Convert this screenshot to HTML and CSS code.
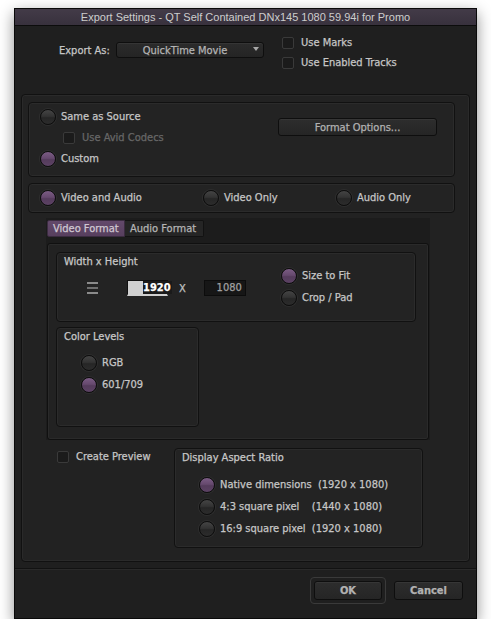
FILE: index.html
```html
<!DOCTYPE html>
<html>
<head>
<meta charset="utf-8">
<link rel="stylesheet" href="styles.css">
</head>
<body>
<div class="window">
  <div class="titlebar">Export Settings - QT Self Contained DNx145 1080 59.94i for Promo</div>
  <div class="top">
    <div class="export-as">
      <span class="export-label">Export As:</span>
      <div class="dropdown"><span class="dd-text">QuickTime Movie</span><span class="dd-arrow"></span></div>
    </div>
    <div class="top-checks">
      <div class="row"><span class="check"></span><span class="lbl">Use Marks</span></div>
      <div class="row"><span class="check"></span><span class="lbl">Use Enabled Tracks</span></div>
    </div>
  </div>
  <div class="panel">
    <div class="group g-source">
      <div class="source-col">
        <div class="row"><span class="radio"></span><span class="lbl">Same as Source</span></div>
        <div class="row indent"><span class="check"></span><span class="lbl disabled">Use Avid Codecs</span></div>
        <div class="row"><span class="radio on"></span><span class="lbl">Custom</span></div>
      </div>
      <div class="btn format-btn">Format Options...</div>
    </div>
    <div class="group g-tracks">
      <div class="row t1"><span class="radio on"></span><span class="lbl">Video and Audio</span></div>
      <div class="row t2"><span class="radio"></span><span class="lbl">Video Only</span></div>
      <div class="row t3"><span class="radio"></span><span class="lbl">Audio Only</span></div>
    </div>
    <div class="tabarea">
      <div class="tabs">
        <div class="tab active">Video Format</div>
        <div class="tab">Audio Format</div>
      </div>
      <div class="tabpane">
        <div class="group g-wh">
          <div class="wh-left">
            <div class="glabel">Width x Height</div>
            <div class="wh-inputs">
              <svg class="link" width="11" height="12" viewBox="0 0 11 12"><rect x="0" y="0" width="11" height="2" fill="#8a8a8a"/><rect x="0" y="5" width="11" height="2" fill="#6f6f6f"/><rect x="0" y="10" width="11" height="2" fill="#8a8a8a"/></svg>
              <div class="field sel"><span class="selblock"></span><span class="seltext">1920</span></div>
              <span class="x">X</span>
              <div class="field">1080</div>
            </div>
          </div>
          <div class="wh-right">
            <div class="row"><span class="radio on"></span><span class="lbl">Size to Fit</span></div>
            <div class="row"><span class="radio"></span><span class="lbl">Crop / Pad</span></div>
          </div>
        </div>
        <div class="group g-color">
          <div class="glabel">Color Levels</div>
          <div class="radios">
            <div class="row"><span class="radio"></span><span class="lbl">RGB</span></div>
            <div class="row"><span class="radio on"></span><span class="lbl">601/709</span></div>
          </div>
        </div>
      </div>
    </div>
    <div class="bottom-row">
      <div class="row preview"><span class="check"></span><span class="lbl">Create Preview</span></div>
      <div class="group g-dar">
        <div class="glabel">Display Aspect Ratio</div>
        <div class="radios">
          <div class="row"><span class="radio on"></span><span class="lbl">Native dimensions&nbsp; (1920 x 1080)</span></div>
          <div class="row"><span class="radio"></span><span class="lbl">4:3 square pixel&nbsp;&nbsp;&nbsp; (1440 x 1080)</span></div>
          <div class="row"><span class="radio"></span><span class="lbl">16:9 square pixel&nbsp; (1920 x 1080)</span></div>
        </div>
      </div>
    </div>
  </div>
  <div class="footer">
    <div class="ok-ring"><div class="btn ok">OK</div></div>
    <div class="btn cancel">Cancel</div>
  </div>
</div>
</body>
</html>
```
FILE: styles.css
```css
html, body {
  margin: 0;
  padding: 0;
  background: #ffffff;
}
body {
  font-family: "DejaVu Sans Condensed", "DejaVu Sans", sans-serif;
  font-size: 11px;
  color: #c6c6c6;
  -webkit-text-stroke: 0.25px currentColor;
}
.window {
  width: 463px;
  height: 611px;
  margin: 8px 0 0 14px;
  box-sizing: border-box;
  border: 1px solid #0a0a0a;
  background: #1f1f1f;
  box-shadow: 0 5px 14px rgba(0, 0, 0, 0.45);
  display: flex;
  flex-direction: column;
}
.titlebar {
  height: 16px;
  line-height: 16px;
  border-bottom: 1px solid #0c0c0c;
  background: linear-gradient(#433b48, #38313d);
  color: #cdcdcd;
  font-family: "Liberation Sans", Arial, sans-serif;
  font-size: 11px;
  -webkit-text-stroke: 0;
  text-align: center;
  flex: none;
}
.top {
  height: 68px;
  box-sizing: border-box;
  padding: 11px 0 0 44px;
  display: flex;
  flex: none;
}
.export-as {
  display: flex;
  align-items: center;
  height: 16px;
  margin-top: 5px;
}
.export-label {
  width: 57px;
}
.dropdown {
  width: 148px;
  height: 16px;
  box-sizing: border-box;
  border: 1px solid #0e0e0e;
  border-radius: 3px;
  background: linear-gradient(#2b2b2b, #242424);
  box-shadow: inset 0 1px 0 #353535;
  display: flex;
  align-items: center;
  justify-content: center;
  position: relative;
  color: #b4b4b4;
}
.dd-text {
  margin-right: 10px;
}
.dd-arrow {
  position: absolute;
  right: 4px;
  top: 4px;
  width: 0;
  height: 0;
  border-left: 3px solid transparent;
  border-right: 3px solid transparent;
  border-top: 4px solid #a8a8a8;
}
.top-checks {
  margin-left: 18px;
  display: flex;
  flex-direction: column;
  gap: 8px;
}
.row {
  display: flex;
  align-items: center;
  height: 12px;
  white-space: nowrap;
}
.lbl {
  line-height: 12px;
}
.check {
  width: 12px;
  height: 12px;
  box-sizing: border-box;
  border: 1px solid #3a3a3a;
  border-radius: 2px;
  background: #1b1b1b;
  margin-right: 7px;
  flex: none;
}
.radio {
  width: 16px;
  height: 16px;
  box-sizing: border-box;
  border-radius: 50%;
  border: 1px solid #0d0d0d;
  background: linear-gradient(#444444 0%, #333333 45%, #262626 55%, #2c2c2c 100%);
  box-shadow: 0 0 0 1px #2e2e2e;
  margin-right: 5px;
  flex: none;
}
.radio.on {
  background: linear-gradient(#7b5c84 0%, #66496e 45%, #553c5c 55%, #5c4264 100%);
}
.disabled {
  color: #676767;
}
.panel {
  margin-left: 6px;
  width: 449px;
  height: 468px;
  box-sizing: border-box;
  border: 1px solid #111111;
  border-radius: 4px;
  background: #222222;
  box-shadow: inset 0 0 0 1px #2a2a2a;
  padding: 7px 0 0 6px;
  flex: none;
}
.group {
  box-sizing: border-box;
  border: 1px solid #111111;
  border-radius: 4px;
  box-shadow: inset 0 0 0 1px #2b2b2b;
  background: #232323;
}
.g-source {
  width: 427px;
  height: 75px;
  display: flex;
}
.source-col {
  display: flex;
  flex-direction: column;
  padding: 6px 0 0 11px;
}
.source-col .row {
  height: 16px;
  margin-bottom: 5px;
}
.source-col .row.indent {
  padding-left: 23px;
}
.btn {
  box-sizing: border-box;
  border: 1px solid #0e0e0e;
  border-radius: 3px;
  background: linear-gradient(#2d2d2d, #252525);
  box-shadow: inset 0 1px 0 #363636;
  color: #b2b2b2;
  display: flex;
  align-items: center;
  justify-content: center;
}
.format-btn {
  width: 159px;
  height: 18px;
  margin: 15px 0 0 auto;
  margin-right: 17px;
}
.g-tracks {
  width: 427px;
  height: 30px;
  margin-top: 6px;
  display: flex;
  align-items: center;
  padding-left: 11px;
}
.g-tracks .row {
  height: 16px;
}
.t1 { width: 163px; }
.t2 { width: 133px; }
.tabarea {
  margin: 5px 0 0 18px;
  width: 384px;
  height: 222px;
  background: #1c1c1c;
  padding: 2px 0 0 1px;
  box-sizing: border-box;
}
.tabs {
  display: flex;
  height: 17px;
}
.tab {
  box-sizing: border-box;
  height: 17px;
  line-height: 15px;
  border: 1px solid #121212;
  background: #252525;
  color: #b4b4b4;
  padding: 0 5px;
}
.tab:first-child {
  width: 78px;
  border-radius: 2px 0 0 2px;
}
.tab:last-child {
  width: 79px;
  border-radius: 0 2px 2px 0;
  border-left: none;
}
.tab.active {
  background: linear-gradient(#63496b, #573f5e);
  color: #d0c8d2;
  border-color: #3b2c40;
}
.tabpane {
  margin-top: 6px;
  width: 382px;
  height: 197px;
  box-sizing: border-box;
  border: 1px solid #101010;
  border-radius: 3px;
  background: #222222;
  box-shadow: inset 0 0 0 1px #2a2a2a;
  padding: 8px 0 0 8px;
}
.g-wh {
  width: 360px;
  height: 70px;
  display: flex;
}
.glabel {
  height: 14px;
  line-height: 14px;
  margin: 2px 0 0 7px;
  color: #c8c8c8;
}
.wh-left {
  width: 224px;
}
.wh-inputs {
  display: flex;
  align-items: center;
  height: 16px;
  margin: 11px 0 0 30px;
}
.link {
  margin-right: 29px;
}
.field {
  width: 42px;
  height: 16px;
  box-sizing: border-box;
  border: 1px solid #0c0c0c;
  background: #161616;
  color: #a0a0a0;
  text-align: right;
  line-height: 14px;
  padding-right: 3px;
}
.field.sel {
  width: 41px;
  display: flex;
  padding: 0;
  border-color: #101010;
  border-bottom: 2px solid #d0d0d0;
  background: #d0d0d0;
}
.selblock {
  width: 15px;
  flex: none;
}
.seltext {
  flex: 1;
  background: #1a1a1a;
  color: #ffffff;
  font-weight: bold;
  text-align: right;
  line-height: 13px;
  padding-right: 1px;
}
.x {
  margin: 0 18px 0 11px;
  color: #c0c0c0;
}
.wh-right {
  display: flex;
  flex-direction: column;
  gap: 6px;
  padding-top: 15px;
}
.wh-right .row,
.radios .row {
  height: 16px;
}
.g-color {
  width: 143px;
  height: 100px;
  margin-top: 5px;
}
.radios {
  display: flex;
  flex-direction: column;
  gap: 6px;
  margin: 11px 0 0 24px;
}
.bottom-row {
  display: flex;
  margin-top: 8px;
}
.preview {
  margin: 3px 0 0 29px;
  width: 117px;
}
.g-dar {
  width: 249px;
  height: 100px;
}
.g-dar .radios {
  margin-top: 12px;
}
.footer {
  margin-top: 6px;
  border-top: 1px solid #121212;
  box-shadow: inset 0 1px 0 #2a2a2a;
  flex: 1;
  display: flex;
  align-items: flex-start;
  justify-content: flex-end;
  padding: 8px 13px 0 0;
}
.ok-ring {
  border: 1px solid #3a3a3a;
  border-radius: 4px;
  padding: 3px;
  margin-right: 8px;
}
.ok {
  width: 68px;
  height: 19px;
  font-weight: bold;
}
.cancel {
  width: 69px;
  height: 19px;
  margin-top: 4px;
  font-weight: bold;
}
```
